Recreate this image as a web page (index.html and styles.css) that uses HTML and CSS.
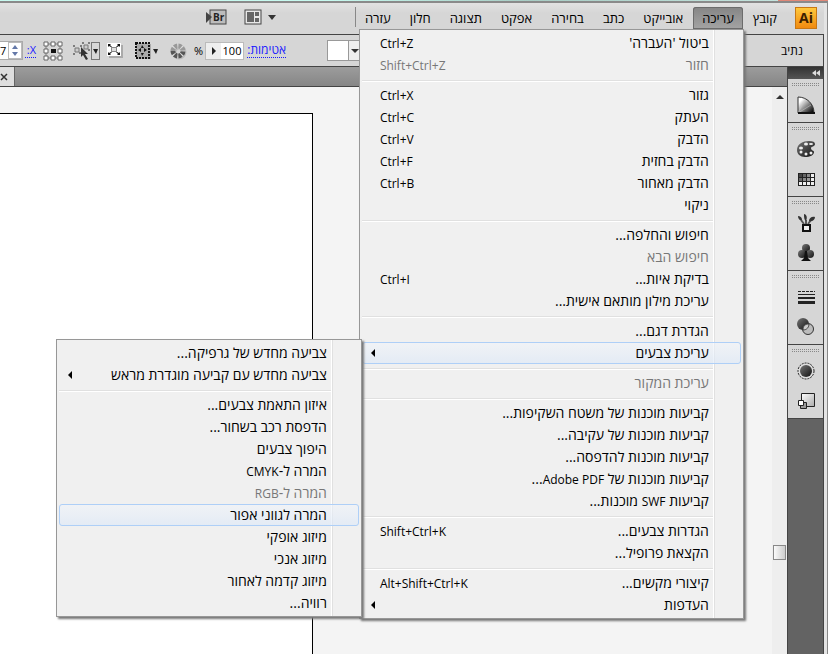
FILE: index.html
```html
<!DOCTYPE html>
<html lang="he" dir="rtl">
<head>
  <meta charset="UTF-8">
  <meta name="viewport" content="width=device-width, initial-scale=1.0">
  <title>Illustrator</title>
  <link rel="stylesheet" href="styles.css">
</head>
<body>
  <div class="desktop-strip"></div>
  <div class="app">
    <header class="menubar">
      <button class="logo" aria-label="Adobe Illustrator">Ai</button>
      <nav class="menus">
        <button class="menu-btn">קובץ</button>
        <div class="menu-wrap">
          <button class="menu-btn active" aria-expanded="true">עריכה</button>
          <ul class="menu edit-menu">
            <li><button><span>ביטול 'העברה'</span><kbd>Ctrl+Z</kbd></button></li>
            <li><button disabled><span>חזור</span><kbd>Shift+Ctrl+Z</kbd></button></li>
            <li class="sep"></li>
            <li><button><span>גזור</span><kbd>Ctrl+X</kbd></button></li>
            <li><button><span>העתק</span><kbd>Ctrl+C</kbd></button></li>
            <li><button><span>הדבק</span><kbd>Ctrl+V</kbd></button></li>
            <li><button><span>הדבק בחזית</span><kbd>Ctrl+F</kbd></button></li>
            <li><button><span>הדבק מאחור</span><kbd>Ctrl+B</kbd></button></li>
            <li><button><span>ניקוי</span></button></li>
            <li class="sep"></li>
            <li><button><span>חיפוש והחלפה...</span></button></li>
            <li><button disabled><span>חיפוש הבא</span></button></li>
            <li><button><span>בדיקת איות...</span><kbd>Ctrl+I</kbd></button></li>
            <li><button><span>עריכת מילון מותאם אישית...</span></button></li>
            <li class="sep"></li>
            <li><button><span>הגדרת דגם...</span></button></li>
            <li class="has-sub">
              <button class="selected"><span>עריכת צבעים</span><i class="arrow"></i></button>
              <ul class="menu sub-menu">
                <li><button><span>צביעה מחדש של גרפיקה...</span></button></li>
                <li><button><span>צביעה מחדש עם קביעה מוגדרת מראש</span><i class="arrow"></i></button></li>
                <li class="sep"></li>
                <li><button><span>איזון התאמת צבעים...</span></button></li>
                <li><button><span>הדפסת רכב בשחור...</span></button></li>
                <li><button><span>היפוך צבעים</span></button></li>
                <li><button><span>המרה ל-<bdi>CMYK</bdi></span></button></li>
                <li><button disabled><span>המרה ל-<bdi>RGB</bdi></span></button></li>
                <li><button class="selected"><span>המרה לגווני אפור</span></button></li>
                <li><button><span>מיזוג אופקי</span></button></li>
                <li><button><span>מיזוג אנכי</span></button></li>
                <li><button><span>מיזוג קדמה לאחור</span></button></li>
                <li><button><span>רוויה...</span></button></li>
              </ul>
            </li>
            <li class="sep"></li>
            <li><button disabled><span>עריכת המקור</span></button></li>
            <li class="sep"></li>
            <li><button><span>קביעות מוכנות של משטח השקיפות...</span></button></li>
            <li><button><span>קביעות מוכנות של עקיבה...</span></button></li>
            <li><button><span>קביעות מוכנות להדפסה...</span></button></li>
            <li><button><span>קביעות מוכנות של <bdi>Adobe PDF</bdi>...</span></button></li>
            <li><button><span>קביעות <bdi>SWF</bdi> מוכנות...</span></button></li>
            <li class="sep"></li>
            <li><button><span>הגדרות צבעים...</span><kbd>Shift+Ctrl+K</kbd></button></li>
            <li><button><span>הקצאת פרופיל...</span></button></li>
            <li class="sep"></li>
            <li><button><span>קיצורי מקשים...</span><kbd>Alt+Shift+Ctrl+K</kbd></button></li>
            <li><button><span>העדפות</span><i class="arrow"></i></button></li>
          </ul>
        </div>
        <button class="menu-btn">אובייקט</button>
        <button class="menu-btn">כתב</button>
        <button class="menu-btn">בחירה</button>
        <button class="menu-btn">אפקט</button>
        <button class="menu-btn">תצוגה</button>
        <button class="menu-btn">חלון</button>
        <button class="menu-btn">עזרה</button>
      </nav>
      <div class="app-tools">
        <button class="icon-btn" aria-label="סידור מסמכים">
          <svg width="32" height="16" viewBox="0 0 32 16">
            <rect x="1" y="1" width="16" height="14" fill="#e8e8e8" stroke="#444"/>
            <path d="M3 3h7v10H3zM11 3h4v4h-4zM11 9h4v4h-4z" fill="#666"/>
            <path d="M24 6h8l-4 5z" fill="#333"/>
          </svg>
        </button>
        <button class="icon-btn" aria-label="Bridge">
          <svg width="22" height="16" viewBox="0 0 22 16">
            <rect x="5" y="1" width="16" height="14" fill="#bcbcbc" stroke="#444"/>
            <path d="M1 3l6 5-6 6z" fill="#444"/>
            <text x="8" y="12" class="br-text">Br</text>
          </svg>
        </button>
      </div>
    </header>

    <div class="control-bar">
      <span class="selection-type">נתיב</span>
      <div class="controls">
        <button class="swatch" aria-label="סגנון"><span class="swatch-color"></span><i class="down"></i></button>
        <label class="link-label opacity-label" for="opacity">אטימות:</label>
        <span class="opacity">
          <input id="opacity" type="text" value="100">
          <button class="step" aria-label="ערכים"></button>
        </span>
        <span class="percent">%</span>
        <button class="icon-btn recolor" aria-label="צביעה מחדש">
          <svg width="18" height="18" viewBox="0 0 18 18" fill="none" stroke-width="5">
            <circle cx="10" cy="10" r="5" stroke="#bbb"/>
            <circle cx="9" cy="9" r="5" stroke="#ddd"/>
            <path d="M4 9a5 5 0 0 0 5 5 5 5 0 0 0 5-5" stroke="#555" stroke-dasharray="3 1"/>
            <path d="M4 9a5 5 0 0 1 5-5 5 5 0 0 1 5 5" stroke="#999" stroke-dasharray="3 1"/>
          </svg>
        </button>
        <button class="icon-btn align" aria-label="יישור">
          <svg width="24" height="18" viewBox="0 0 24 18">
            <rect x="2" y="2" width="14" height="15" fill="#aaa"/>
            <rect x="1" y="1" width="13" height="15" fill="#aaa" stroke="#111" stroke-width="2" stroke-dasharray="2 1"/>
            <path d="M7 3l2 3H6zM7 14l2-3H6zM3 8l3-2v4zM12 8L9 6v4z" fill="#111"/>
            <path d="M18 7h5l-2 5z" fill="#222"/>
          </svg>
        </button>
        <button class="icon-btn isolate" aria-label="בידוד">
          <svg width="16" height="16" viewBox="0 0 16 16">
            <rect x="2" y="2" width="14" height="13" fill="#aaa"/>
            <rect width="14" height="13" fill="#fff"/>
            <rect x="4.500" y="4.500" width="5" height="4" fill="#ddd" stroke="#888"/>
            <path d="M1 1h3L3 2l2 2-1 0-2-1-1 1zM13 1h-3l1 1-2 2h1l2-1 1 1zM1 12h3l-1-1 2-2H4l-2 1-1-1zM13 12h-3l1-1-2-2h1l2 1 1-1z" fill="#111"/>
          </svg>
        </button>
        <button class="icon-btn select" aria-label="בחירת דומים">
          <svg width="28" height="20" viewBox="0 0 28 20">
            <path d="M2 7h4v4H2zM11 4h4v4h-4z" fill="#ccc" stroke="#777"/>
            <path d="M0 5h2M0 13h2M7 5h2M6 12h2M9 2h2M15 2h2M15 9h2" stroke="#222"/>
            <path d="M8 6v10l2-2 3 5 2-1-3-5h3z" fill="#333"/>
            <rect x="18.500" y="1.500" width="8" height="17" fill="#d8d8d8" stroke="#777"/>
            <path d="M20 8h5l-2 5z" fill="#222"/>
          </svg>
        </button>
        <button class="icon-btn anchor" aria-label="נקודת ייחוס">
          <svg width="20" height="20" viewBox="0 0 20 20">
            <path d="M3 3h14v14H3z" fill="none" stroke="#777"/>
            <g fill="#fff" stroke="#666">
              <path d="M1 1h4v4H1zM8 1h4v4H8zM15 1h4v4h-4zM1 8h4v4H1zM15 8h4v4h-4zM1 15h4v4H1zM8 15h4v4H8zM15 15h4v4h-4z"/>
            </g>
            <path d="M8 8h5v4H8z" fill="#111"/>
          </svg>
        </button>
        <label class="link-label x-label" for="pos-x">X:</label>
        <span class="position">
          <span class="spinner"><i class="spin-up"></i><i class="spin-down"></i></span>
          <input id="pos-x" type="text" value="7">
        </span>
      </div>
    </div>

    <div class="main">
      <aside class="dock">
        <button class="dock-head" aria-label="הרחבת לוחות">
          <svg width="8" height="6" viewBox="0 0 8 6"><path d="M4 0v6L0 3zM8 0v6L4 3z" fill="#ddd"/></svg>
        </button>
        <div class="dock-group">
          <button aria-label="מדריך צבעים">
            <svg width="20" height="20" viewBox="0 0 20 20">
              <defs>
                <linearGradient id="fan" x2="1" y2="1"><stop offset=".2" stop-color="#fff"/><stop offset=".5" stop-color="#999"/><stop offset=".9" stop-color="#111"/></linearGradient>
                <linearGradient id="dark" x2="1" y2="1"><stop stop-color="#777"/><stop offset="1" stop-color="#111"/></linearGradient>
                <linearGradient id="light" x2="1" y2="1"><stop stop-color="#fff"/><stop offset="1" stop-color="#aaa"/></linearGradient>
              </defs>
              <path d="M2 2c9 0 16 7 16 16H2z" fill="url(#fan)" stroke="#333"/>
              <path d="M2 18L9 4M2 18l13-8" stroke="#ccc" stroke-opacity=".5"/>
              <path d="M2 18h17" stroke="#111" stroke-width="2"/>
            </svg>
          </button>
        </div>
        <div class="dock-group">
          <button aria-label="צבע">
            <svg width="20" height="20" viewBox="0 0 20 20">
              <path d="M1 11C1 5 7 2 13 2c4 0 6 1 6 3 0 3-4 2-4 4 0 3 3 2 3 4 0 3-4 5-9 5-5 0-8-3-8-7z" fill="url(#dark)"/>
              <g fill="#eee"><ellipse cx="5" cy="9" rx="2" ry="1.500"/><ellipse cx="10" cy="5" rx="2" ry="1.500"/><ellipse cx="15" cy="5" rx="2" ry="1"/><circle cx="5" cy="13" r="1.500"/><circle cx="10" cy="15" r="1.500"/><circle cx="15" cy="14" r="1.500"/></g>
            </svg>
          </button>
          <button aria-label="דוגמיות">
            <svg width="20" height="20" viewBox="0 0 20 20">
              <path d="M2 4h17v13H2z" fill="#222"/>
              <path d="M3 5h3v3H3z" fill="#444"/><path d="M7 5h3v3H7zM3 9h3v3H3z" fill="#666"/><path d="M11 5h3v3h-3zM7 9h3v3H7z" fill="#888"/>
              <path d="M15 5h3v3h-3zM15 9h3v3h-3zM3 13h3v3H3zM7 13h3v3H7zM11 13h3v3h-3zM15 13h3v3h-3z" fill="#eee"/><path d="M11 9h3v3h-3z" fill="#999"/>
            </svg>
          </button>
        </div>
        <div class="dock-group">
          <button aria-label="מברשות">
            <svg width="20" height="20" viewBox="0 0 20 20">
              <path d="M8 11L5 7M10 11V7M12 11l3-4" stroke="#555" stroke-width="2"/>
              <path d="M2 3c2 0 4 1 4 4-2 1-4-1-4-4zM8 1c2 0 4 3 2 7-2-1-2-4-2-7zM19 4c0 3-3 5-6 4 0-3 3-5 6-4z" fill="#333"/>
              <path d="M6 11h9v8H6z" fill="#111"/><path d="M8 13h5v4H8z" fill="#eee"/>
            </svg>
          </button>
          <button aria-label="סמלים">
            <svg width="20" height="20" viewBox="0 0 20 20" fill="url(#dark)">
              <circle cx="10" cy="5" r="4"/><circle cx="6" cy="11" r="4"/><circle cx="14" cy="11" r="4"/>
              <path d="M9 8h2l1 7 3 3H5l3-3z" fill="#111"/>
            </svg>
          </button>
        </div>
        <div class="dock-group">
          <button aria-label="קו">
            <svg width="20" height="20" viewBox="0 0 20 20" stroke="#222">
              <path d="M2 4.500h17" stroke-dasharray="3 1"/><path d="M2 7.500h17"/><path d="M2 11h17" stroke-width="2"/><path d="M2 15.500h17" stroke-width="3"/>
            </svg>
          </button>
          <button aria-label="שקיפות">
            <svg width="20" height="20" viewBox="0 0 20 20">
              <circle cx="7" cy="7" r="6" fill="url(#dark)"/><circle cx="12" cy="12" r="5.500" fill="#aaa" fill-opacity=".6" stroke="#333"/>
              <path d="M7 13c0-4 2-6 6-6 0 3-2 6-6 6z" fill="#ccc" stroke="#444"/>
            </svg>
          </button>
        </div>
        <div class="dock-group">
          <button aria-label="מראה">
            <svg width="20" height="20" viewBox="0 0 20 20">
              <circle cx="10" cy="10" r="8" fill="#ddd" stroke="#222" stroke-dasharray="2 1"/><circle cx="10" cy="10" r="6" fill="url(#dark)"/>
            </svg>
          </button>
          <button aria-label="סגנונות גרפיים">
            <svg width="20" height="20" viewBox="0 0 20 20">
              <path d="M5.500 2.500h13v13h-13z" fill="url(#light)" stroke="#222"/><path d="M4.500 11.500h6v6h-6z" fill="#999" stroke="#222"/><path d="M2.500 9.500h5v5h-5z" fill="#fff" stroke="#222"/>
            </svg>
          </button>
        </div>
      </aside>

      <div class="document">
        <div class="tabs">
          <button class="tab" aria-label="סגירה">
            <svg width="8" height="8" viewBox="0 0 8 8"><path d="M1 1l6 6M7 1L1 7" stroke="#333" stroke-width="1.500"/></svg>
          </button>
        </div>
        <div class="workspace">
          <div class="scrollbar"><i class="scroll-up"></i><i class="thumb"></i></div>
          <div class="artboard"></div>
        </div>
      </div>
    </div>
  </div>
</body>
</html>
```
FILE: styles.css
```css
/* Reset */
* {
  margin: 0;
  padding: 0;
  box-sizing: border-box;
}

body {
  font-family: "Open Sans", "Noto Sans", "DejaVu Sans", sans-serif;
  font-size: 12px;
  color: #000;
  background: #d6d6d6;
  height: 100vh;
  display: flex;
  flex-direction: column;
  overflow: hidden;
}

button,
input {
  font: inherit;
  color: inherit;
  border: none;
  background: none;
}

svg {
  display: block;
}

/* Window edge */
.desktop-strip {
  height: 3px;
  background: linear-gradient(to left, #e08878 50px, #c4e4de 50px, #a8ccc4 300px, #c8faf0 500px);
  border-bottom: 2px solid #8a8a8a;
}

.app {
  flex: 1;
  min-height: 0;
  display: flex;
  flex-direction: column;
  padding-right: 4px;
  background: linear-gradient(to left, #888 1px, #e4e4e4 1px, #e4e4e4 4px, #d6d6d6 4px);
}

/* Menu bar */
.menubar {
  height: 31px;
  padding: 4px 7px 0 0;
  display: flex;
  align-items: flex-start;
  background: linear-gradient(#e2e2e2, #d6d6d6 10px);
}

.logo {
  width: 22px;
  height: 22px;
  background: linear-gradient(#ffc83c, #f08a10);
  border: 1px solid #c87814;
  font-size: 14px;
  line-height: 20px;
  font-weight: bold;
  color: #3c2000;
}

.menus {
  display: flex;
  gap: 1px;
  margin-right: 9px;
}

.menu-wrap {
  position: relative;
}

.menu-btn {
  height: 22px;
  padding: 0 9px;
  font-size: 13px;
  line-height: 22px;
  white-space: nowrap;
}

.menu-btn.active {
  background: linear-gradient(#858585, #a4a4a4);
  box-shadow: inset 0 0 0 1px #6c6c6c;
  border-radius: 3px 3px 0 0;
}

.app-tools {
  display: flex;
  gap: 17px;
  height: 20px;
  align-items: center;
  padding-right: 79px;
  border-right: 1px solid #888;
}

.br-text {
  font: bold 10px "Open Sans", sans-serif;
  fill: #222;
  direction: ltr;
}

/* Drop-down menus */
.menu {
  position: absolute;
  z-index: 10;
  padding: 2px;
  list-style: none;
  background: linear-gradient(to left, transparent 28px, #e0e0e0 28px, #e0e0e0 29px, #fff 29px, #fff 30px, transparent 30px) #f0f0f0;
  border: 1px solid #979797;
  box-shadow: 2px 2px 2px #777;
}

.edit-menu {
  top: 100%;
  right: -1px;
  width: 385px;
}

.sub-menu {
  top: -3px;
  right: 100%;
  width: 306px;
}

.has-sub {
  position: relative;
}

.menu button {
  width: 100%;
  height: 22px;
  padding: 0 31px 0 8px;
  display: flex;
  align-items: baseline;
  justify-content: space-between;
  font-size: 14px;
  line-height: 20px;
  white-space: nowrap;
  border: 1px solid transparent;
  border-radius: 3px;
}

.menu button:disabled {
  color: #777;
}

.menu button.selected {
  background: linear-gradient(rgba(240, 244, 250, 0.6), rgba(220, 232, 248, 0.6));
  border-color: #aecff7;
}

.menu bdi,
.menu kbd {
  font-family: inherit;
  font-size: 12px;
}

.menu kbd {
  direction: ltr;
  margin-left: 9px;
}

.arrow {
  align-self: center;
  border: solid transparent;
  border-width: 4px 0;
  border-right: 4px solid #000;
}

.sep {
  height: 8px;
  margin-right: 28px;
  background: linear-gradient(transparent 4px, #e0e0e0 4px, #e0e0e0 5px, #fff 5px, #fff 6px, transparent 6px);
}

/* Control bar */
.control-bar {
  height: 33px;
  display: flex;
  align-items: center;
  justify-content: space-between;
  padding-right: 20px;
  background: #d6d6d6;
  border: solid #444;
  border-width: 1px 1px 1px 0;
  font-size: 11px;
}

.selection-type {
  font-size: 12px;
}

.controls {
  display: flex;
  align-items: center;
}

.swatch {
  width: 34px;
  height: 21px;
  margin-left: 41px;
  display: flex;
  align-items: center;
  direction: ltr;
  background: #eee;
  border: 1px solid #999;
}

.swatch-color {
  width: 21px;
  height: 19px;
  background: #fff;
  border-right: 1px solid #999;
}

.down {
  margin-left: 2px;
  border: solid transparent;
  border-width: 0 4px;
  border-top: 4px solid #333;
}

.link-label {
  color: #1a1aff;
  line-height: 14px;
  border-bottom: 1px dotted #1a1aff;
}

.opacity-label {
  width: 39px;
  margin-left: 3px;
  font-size: 12px;
  white-space: nowrap;
}

.opacity {
  display: flex;
  width: 39px;
  height: 18px;
  background: #fff;
  border: 1px solid #bbb;
}

.opacity input {
  width: 22px;
  text-align: center;
}

.step {
  width: 15px;
  background: #eee;
  display: flex;
  align-items: center;
  justify-content: center;
}

.step::after {
  content: "";
  border: solid transparent;
  border-width: 4px 0;
  border-left: 4px solid #222;
}

.percent {
  width: 10px;
  margin: 0 2px 0 6px;
}

.recolor {
  margin-left: 10px;
}

.align {
  margin-left: 12px;
}

.isolate {
  margin-left: 6px;
}

.select {
  margin-left: 10px;
}

.anchor {
  margin-left: 7px;
}

.x-label {
  width: 11px;
  margin-left: 2px;
}

.position {
  display: flex;
  width: 23px;
  height: 19px;
  background: #fff;
  border: 1px solid #aaa;
  border-left: none;
}

.position input {
  width: 8px;
  direction: ltr;
}

.spinner {
  width: 14px;
  display: flex;
  flex-direction: column;
  align-items: center;
  justify-content: space-evenly;
  border: 1px solid #bbb;
}

.spin-up,
.spin-down {
  border: solid transparent;
  border-width: 0 3px;
}

.spin-up {
  border-bottom: 4px solid #6478a8;
}

.spin-down {
  border-top: 4px solid #6478a8;
}

/* Panels dock */
.main {
  flex: 1;
  min-height: 0;
  display: flex;
}

.dock {
  width: 37px;
  background: #636363;
  border: solid #444;
  border-width: 0 1px;
}

.dock-head {
  width: 100%;
  height: 12px;
  padding-right: 3px;
  display: flex;
  align-items: center;
  background: linear-gradient(#333, #555);
}

.dock-group {
  padding: 4px 0 2px;
  display: flex;
  flex-direction: column;
  background: #d6d6d6;
  border-bottom: 1px solid #444;
}

/* Grip */
.dock-group::before {
  content: "";
  height: 1px;
  margin: 0 4px 4px;
  border: dotted #888;
  border-width: 1px 0;
}

.dock-group button {
  height: 30px;
  display: flex;
  align-items: center;
  justify-content: center;
}

/* Document */
.document {
  flex: 1;
  display: flex;
  flex-direction: column;
}

.tabs {
  height: 20px;
  display: flex;
  justify-content: flex-end;
  background: linear-gradient(#9c9c9c, #868686);
  border-bottom: 1px solid #444;
}

.tab {
  width: 15px;
  display: flex;
  align-items: center;
  justify-content: flex-end;
  background: #dedede;
  border-right: 1px solid #666;
}

.workspace {
  flex: 1;
  display: flex;
  justify-content: space-between;
  background: #f4f4f4;
}

.scrollbar {
  width: 15px;
  padding-bottom: 94px;
  display: flex;
  flex-direction: column;
  justify-content: space-between;
  align-items: center;
  background: #eee;
}

.scroll-up {
  margin-top: 8px;
  border: solid transparent;
  border-width: 0 4px;
  border-bottom: 4px solid #333;
}

.thumb {
  width: 13px;
  height: 15px;
  background: linear-gradient(to right, #fafafa, #ccc);
  border: 1px solid #888;
}

.artboard {
  width: 313px;
  margin-top: 26px;
  background: #fff;
  border: solid #000;
  border-width: 1px 1px 0 0;
}
```
